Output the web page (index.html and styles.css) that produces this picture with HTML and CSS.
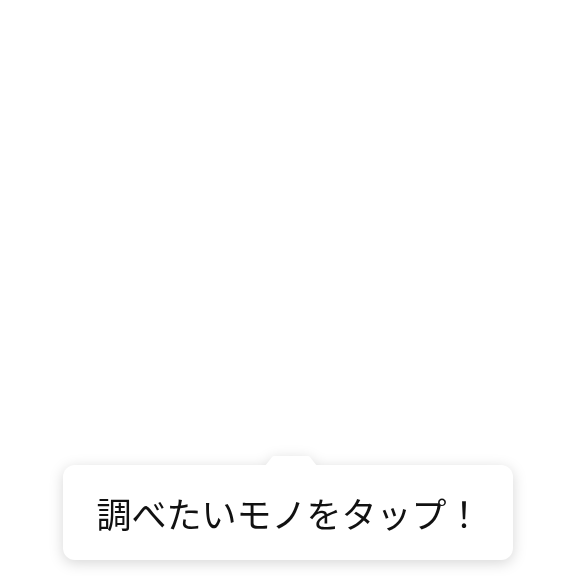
FILE: index.html
```html
<!DOCTYPE html>
<html lang="ja">
<head>
<meta charset="utf-8">
<link rel="stylesheet" href="styles.css">
</head>
<body>
<div class="page">
  <div class="tip">
    <svg class="arrow" width="52" height="10" viewBox="0 0 52 10"><path d="M0 10 L7.5 0.6 Q8 0 9 0 L43 0 Q44 0 44.5 0.6 L52 10 Z" fill="#fff"/></svg>
    <div class="box">調べたいモノをタップ！</div>
  </div>
</div>
</body>
</html>
```
FILE: styles.css
```css
html, body { margin: 0; padding: 0; background: #fff; }
.page {
  height: 576px;
  display: flex;
  flex-direction: column;
  justify-content: flex-end;
  align-items: center;
  padding-bottom: 16px;
  box-sizing: border-box;
}
.tip {
  display: flex;
  flex-direction: column;
  align-items: center;
  filter: drop-shadow(0 3px 7px rgba(0,0,0,0.16));
}
.arrow { display: block; margin-bottom: -1px; margin-left: 5px; }
.box {
  width: 450px;
  height: 95px;
  background: #fff;
  border-radius: 12px;
  display: flex;
  align-items: center;
  justify-content: center;
  font-family: "Noto Sans CJK JP", sans-serif;
  font-size: 35px;
  font-weight: 400;
  color: #111;
  box-sizing: border-box;
  padding-left: 2px;
}
```
